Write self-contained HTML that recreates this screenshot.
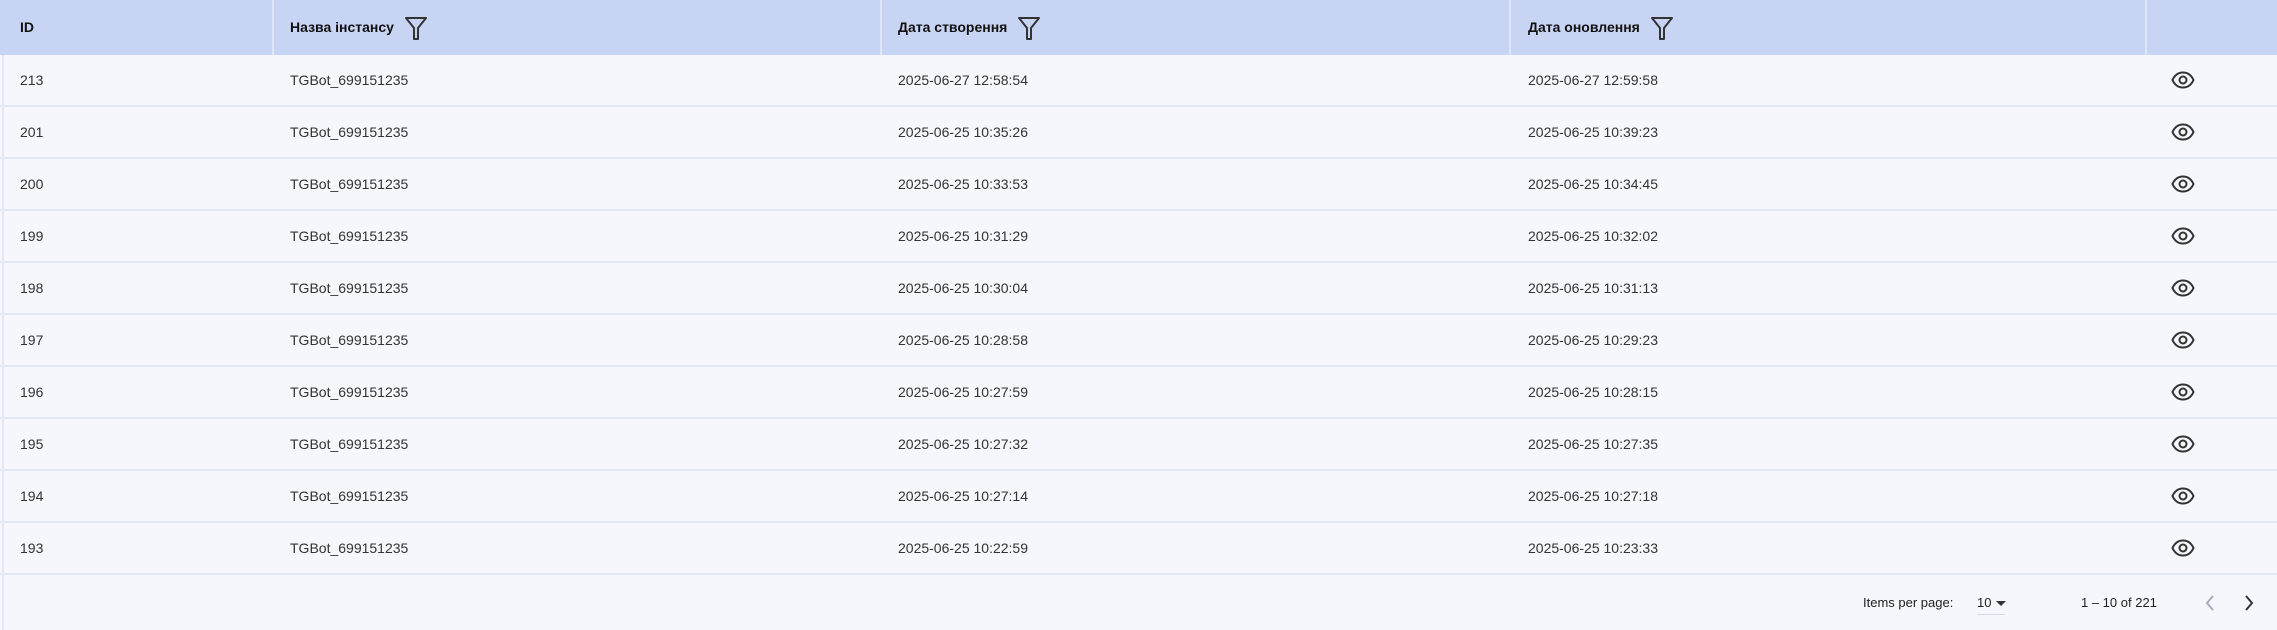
<!DOCTYPE html>
<html><head><meta charset="utf-8"><style>
body{margin:0;width:2277px;height:630px;background:#f5f7fc;font-family:"Liberation Sans",sans-serif;overflow:hidden;position:relative;color:#2a2c33}
.hd{position:absolute;left:0;top:0;width:2277px;height:55px;background:#c8d4f3}
.vd{position:absolute;top:0;width:2px;height:55px;background:#dde5f7}
.ht{position:absolute;top:0;height:55px;line-height:53px;font-size:14px;font-weight:bold;color:#111;display:flex;align-items:center}
.ht svg{margin-left:10px}
.row{position:absolute;left:0;width:2277px;height:52px;border-bottom:2px solid #e3e8f6;box-sizing:border-box}
.c{position:absolute;top:0;line-height:50px;font-size:14px;color:#333}
.eye{position:absolute;left:2171px;top:16px}
.ft{position:absolute;top:594px;font-size:13px;color:#222;line-height:18px}
</style></head><body>
<div class="hd"></div>
<div class="vd" style="left:2px;background:#c8d4f3"></div>
<div class="vd" style="left:272px"></div>
<div class="vd" style="left:880px"></div>
<div class="vd" style="left:1509px"></div>
<div class="vd" style="left:2145px"></div>
<div class="ht" style="left:20px">ID</div>
<div class="ht" style="left:290px">Назва інстансу<svg width="24" height="26" viewBox="0 0 24 26"><path d="M2 3H22L14 13V24H10V13Z" fill="none" stroke="#333" stroke-width="2" stroke-linejoin="round"/></svg></div>
<div class="ht" style="left:898px">Дата створення<svg width="24" height="26" viewBox="0 0 24 26"><path d="M2 3H22L14 13V24H10V13Z" fill="none" stroke="#333" stroke-width="2" stroke-linejoin="round"/></svg></div>
<div class="ht" style="left:1528px">Дата оновлення<svg width="24" height="26" viewBox="0 0 24 26"><path d="M2 3H22L14 13V24H10V13Z" fill="none" stroke="#333" stroke-width="2" stroke-linejoin="round"/></svg></div>

<div style="position:absolute;left:2px;top:55px;width:2px;height:575px;background:#e3e8f6"></div>

<div class="row" style="top:55px"><span class="c" style="left:20px">213</span><span class="c" style="left:290px">TGBot_699151235</span><span class="c" style="left:898px">2025-06-27 12:58:54</span><span class="c" style="left:1528px">2025-06-27 12:59:58</span><svg class="eye" width="24" height="18" viewBox="0 0 24 18"><path d="M1.5 9C4 3.5 8 1.5 12 1.5S20 3.5 22.5 9C20 14.5 16 16.5 12 16.5S4 14.5 1.5 9Z" fill="none" stroke="#333" stroke-width="2"/><circle cx="12" cy="9" r="3.5" fill="none" stroke="#333" stroke-width="2"/></svg></div>
<div class="row" style="top:107px"><span class="c" style="left:20px">201</span><span class="c" style="left:290px">TGBot_699151235</span><span class="c" style="left:898px">2025-06-25 10:35:26</span><span class="c" style="left:1528px">2025-06-25 10:39:23</span><svg class="eye" width="24" height="18" viewBox="0 0 24 18"><path d="M1.5 9C4 3.5 8 1.5 12 1.5S20 3.5 22.5 9C20 14.5 16 16.5 12 16.5S4 14.5 1.5 9Z" fill="none" stroke="#333" stroke-width="2"/><circle cx="12" cy="9" r="3.5" fill="none" stroke="#333" stroke-width="2"/></svg></div>
<div class="row" style="top:159px"><span class="c" style="left:20px">200</span><span class="c" style="left:290px">TGBot_699151235</span><span class="c" style="left:898px">2025-06-25 10:33:53</span><span class="c" style="left:1528px">2025-06-25 10:34:45</span><svg class="eye" width="24" height="18" viewBox="0 0 24 18"><path d="M1.5 9C4 3.5 8 1.5 12 1.5S20 3.5 22.5 9C20 14.5 16 16.5 12 16.5S4 14.5 1.5 9Z" fill="none" stroke="#333" stroke-width="2"/><circle cx="12" cy="9" r="3.5" fill="none" stroke="#333" stroke-width="2"/></svg></div>
<div class="row" style="top:211px"><span class="c" style="left:20px">199</span><span class="c" style="left:290px">TGBot_699151235</span><span class="c" style="left:898px">2025-06-25 10:31:29</span><span class="c" style="left:1528px">2025-06-25 10:32:02</span><svg class="eye" width="24" height="18" viewBox="0 0 24 18"><path d="M1.5 9C4 3.5 8 1.5 12 1.5S20 3.5 22.5 9C20 14.5 16 16.5 12 16.5S4 14.5 1.5 9Z" fill="none" stroke="#333" stroke-width="2"/><circle cx="12" cy="9" r="3.5" fill="none" stroke="#333" stroke-width="2"/></svg></div>
<div class="row" style="top:263px"><span class="c" style="left:20px">198</span><span class="c" style="left:290px">TGBot_699151235</span><span class="c" style="left:898px">2025-06-25 10:30:04</span><span class="c" style="left:1528px">2025-06-25 10:31:13</span><svg class="eye" width="24" height="18" viewBox="0 0 24 18"><path d="M1.5 9C4 3.5 8 1.5 12 1.5S20 3.5 22.5 9C20 14.5 16 16.5 12 16.5S4 14.5 1.5 9Z" fill="none" stroke="#333" stroke-width="2"/><circle cx="12" cy="9" r="3.5" fill="none" stroke="#333" stroke-width="2"/></svg></div>
<div class="row" style="top:315px"><span class="c" style="left:20px">197</span><span class="c" style="left:290px">TGBot_699151235</span><span class="c" style="left:898px">2025-06-25 10:28:58</span><span class="c" style="left:1528px">2025-06-25 10:29:23</span><svg class="eye" width="24" height="18" viewBox="0 0 24 18"><path d="M1.5 9C4 3.5 8 1.5 12 1.5S20 3.5 22.5 9C20 14.5 16 16.5 12 16.5S4 14.5 1.5 9Z" fill="none" stroke="#333" stroke-width="2"/><circle cx="12" cy="9" r="3.5" fill="none" stroke="#333" stroke-width="2"/></svg></div>
<div class="row" style="top:367px"><span class="c" style="left:20px">196</span><span class="c" style="left:290px">TGBot_699151235</span><span class="c" style="left:898px">2025-06-25 10:27:59</span><span class="c" style="left:1528px">2025-06-25 10:28:15</span><svg class="eye" width="24" height="18" viewBox="0 0 24 18"><path d="M1.5 9C4 3.5 8 1.5 12 1.5S20 3.5 22.5 9C20 14.5 16 16.5 12 16.5S4 14.5 1.5 9Z" fill="none" stroke="#333" stroke-width="2"/><circle cx="12" cy="9" r="3.5" fill="none" stroke="#333" stroke-width="2"/></svg></div>
<div class="row" style="top:419px"><span class="c" style="left:20px">195</span><span class="c" style="left:290px">TGBot_699151235</span><span class="c" style="left:898px">2025-06-25 10:27:32</span><span class="c" style="left:1528px">2025-06-25 10:27:35</span><svg class="eye" width="24" height="18" viewBox="0 0 24 18"><path d="M1.5 9C4 3.5 8 1.5 12 1.5S20 3.5 22.5 9C20 14.5 16 16.5 12 16.5S4 14.5 1.5 9Z" fill="none" stroke="#333" stroke-width="2"/><circle cx="12" cy="9" r="3.5" fill="none" stroke="#333" stroke-width="2"/></svg></div>
<div class="row" style="top:471px"><span class="c" style="left:20px">194</span><span class="c" style="left:290px">TGBot_699151235</span><span class="c" style="left:898px">2025-06-25 10:27:14</span><span class="c" style="left:1528px">2025-06-25 10:27:18</span><svg class="eye" width="24" height="18" viewBox="0 0 24 18"><path d="M1.5 9C4 3.5 8 1.5 12 1.5S20 3.5 22.5 9C20 14.5 16 16.5 12 16.5S4 14.5 1.5 9Z" fill="none" stroke="#333" stroke-width="2"/><circle cx="12" cy="9" r="3.5" fill="none" stroke="#333" stroke-width="2"/></svg></div>
<div class="row" style="top:523px"><span class="c" style="left:20px">193</span><span class="c" style="left:290px">TGBot_699151235</span><span class="c" style="left:898px">2025-06-25 10:22:59</span><span class="c" style="left:1528px">2025-06-25 10:23:33</span><svg class="eye" width="24" height="18" viewBox="0 0 24 18"><path d="M1.5 9C4 3.5 8 1.5 12 1.5S20 3.5 22.5 9C20 14.5 16 16.5 12 16.5S4 14.5 1.5 9Z" fill="none" stroke="#333" stroke-width="2"/><circle cx="12" cy="9" r="3.5" fill="none" stroke="#333" stroke-width="2"/></svg></div>

<div class="ft" style="left:1863px">Items per page:</div>
<div class="ft" style="left:1977px">10</div>
<svg style="position:absolute;left:1995px;top:600px" width="12" height="8"><path d="M1 1H11L6 6Z" fill="#333"/></svg>
<div style="position:absolute;left:1977px;top:614px;width:28px;height:1px;background:#d8dcea"></div>
<div class="ft" style="left:2081px">1 – 10 of 221</div>
<svg style="position:absolute;left:2203px;top:593px" width="14" height="20"><path d="M10 3L4 10L10 17" fill="none" stroke="#aab" stroke-width="2"/></svg>
<svg style="position:absolute;left:2242px;top:593px" width="14" height="20"><path d="M4 3L10 10L4 17" fill="none" stroke="#333" stroke-width="2"/></svg>
</body></html>
